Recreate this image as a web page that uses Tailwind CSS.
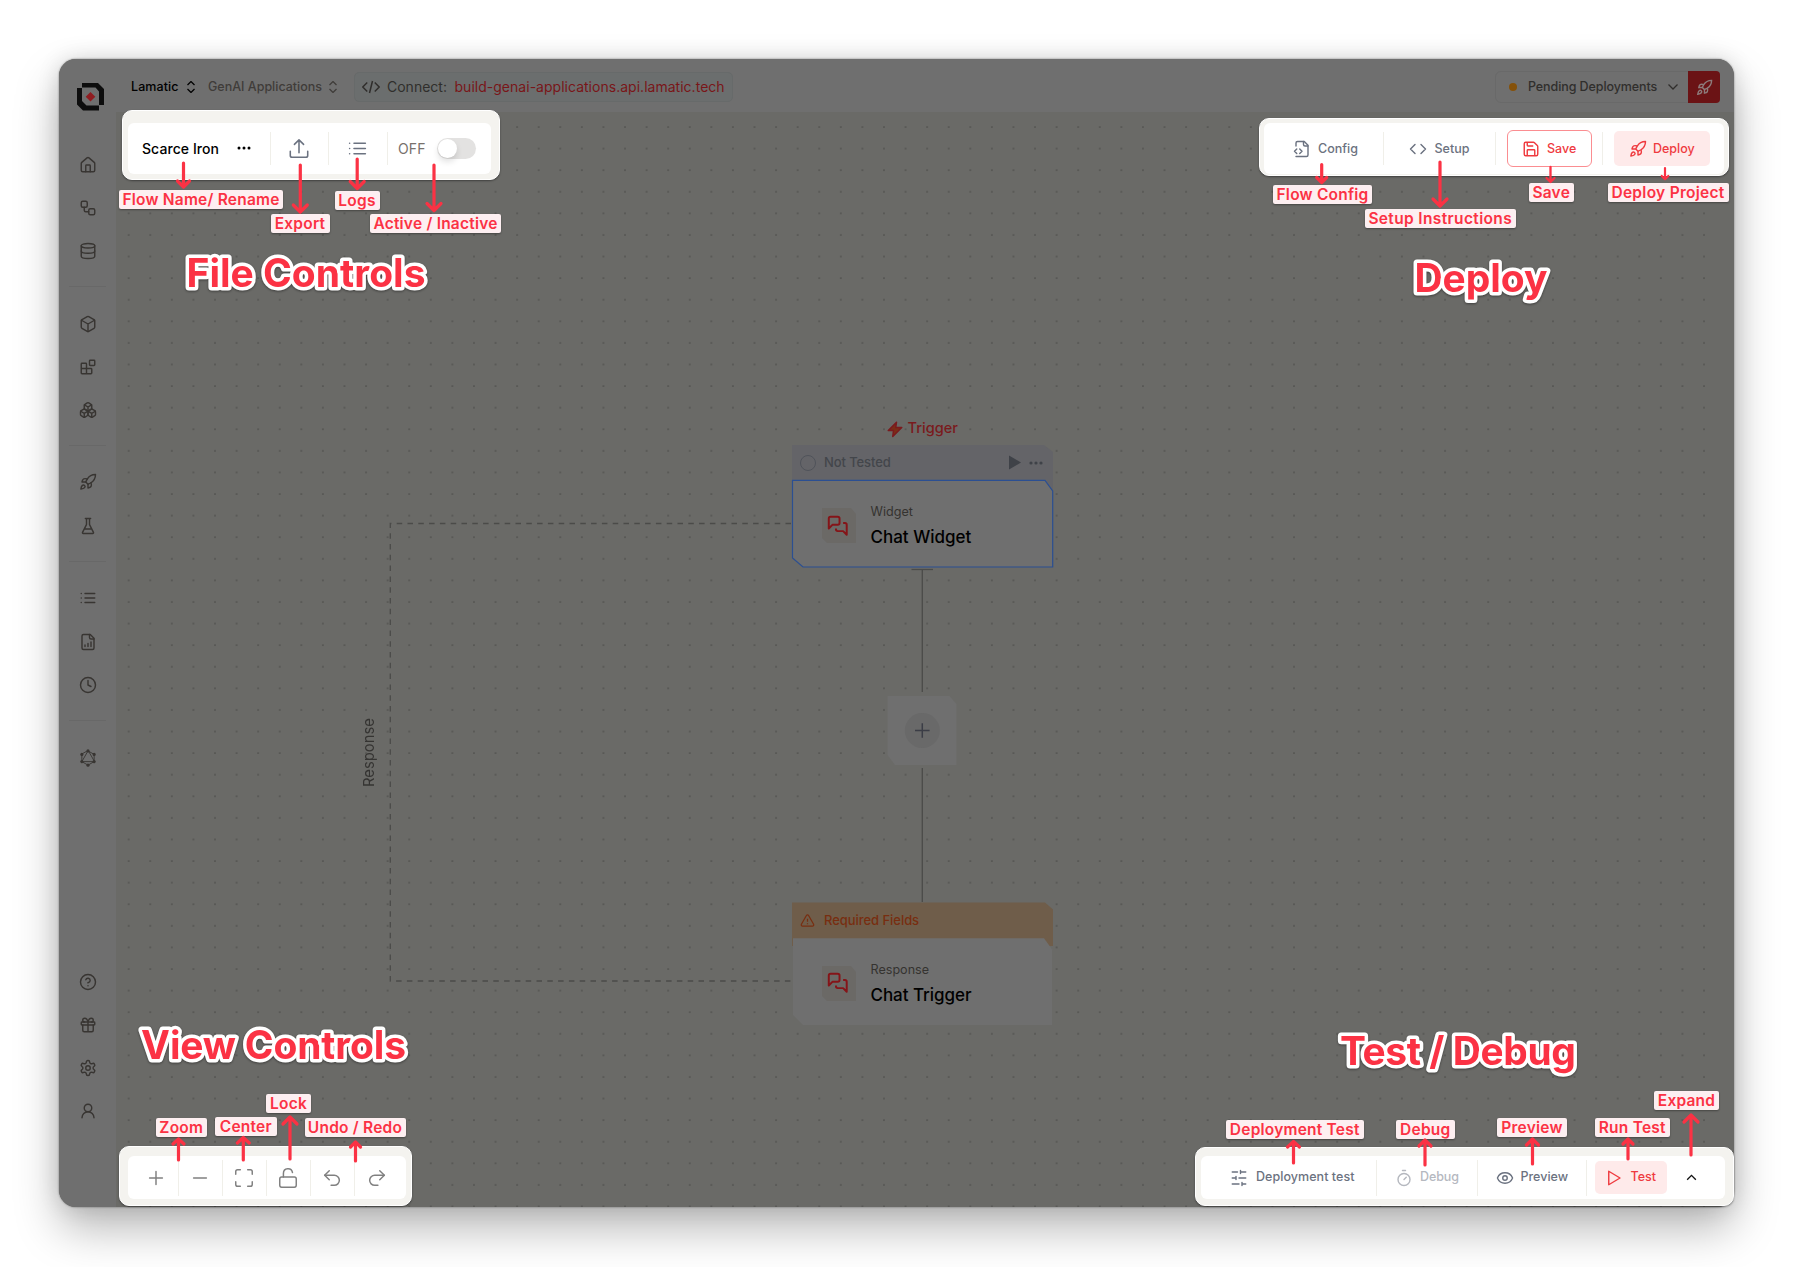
<!DOCTYPE html>
<html lang="en">
<head>
<meta charset="utf-8">
<title>Flow editor guide</title>
<script src="https://cdn.jsdelivr.net/npm/@tailwindcss/browser@4"></script>
</head>
<body class="bg-white font-[Inter,sans-serif] whitespace-nowrap">
<svg class="hidden">
  <defs>
    <symbol id="rocket" viewBox="0 0 24 24"><path d="M4.5 16.5c-1.5 1.26-2 5-2 5s3.74-.5 5-2c.71-.84.7-2.13-.09-2.91a2.18 2.18 0 0 0-2.91-.09z"/><path d="m12 15-3-3a22 22 0 0 1 2-3.95A12.88 12.88 0 0 1 22 2c0 2.72-.78 7.5-6 11a22.35 22.35 0 0 1-4 2z"/><path d="M9 12H4s.55-3.03 2-4c1.62-1.08 5 0 5 0"/><path d="M12 15v5s3.03-.55 4-2c1.08-1.62 0-5 0-5"/></symbol>
    <symbol id="list" viewBox="0 0 24 24"><path d="M8 6h13M8 12h13M8 18h13M3 6h.01M3 12h.01M3 18h.01"/></symbol>
    <symbol id="updown" viewBox="0 0 24 24"><path d="m5 8 7-7 7 7M5 16l7 7 7-7"/></symbol>
    <symbol id="chat" viewBox="0 0 24 24"><path d="M14 9a2 2 0 0 1-2 2H6l-4 4V4a2 2 0 0 1 2-2h8a2 2 0 0 1 2 2z"/><path d="M18 9h2a2 2 0 0 1 2 2v11l-4-4h-6a2 2 0 0 1-2-2v-1"/></symbol>
    <symbol id="redo" viewBox="0 0 24 24"><path d="m15 14 5-5-5-5"/><path d="M20 9H9.500a5.500 5.500 0 0 0 0 11H13"/></symbol>
  </defs>
</svg>
<main class="relative h-[1267px] w-[1793px] overflow-hidden pt-[59px] pl-[59px]">

  <div class="flex h-[1148px] w-[1674.5px] overflow-hidden rounded-[17px] bg-[#6a6a67] shadow-[0_22px_45px_rgba(0,0,0,0.28),0_0_22px_rgba(0,0,0,0.13),0_0_2px_rgba(0,0,0,0.5)]">
    <!-- Sidebar -->
    <nav class="flex w-[57px] shrink-0 flex-col items-center bg-[#6f6f6f] stroke-[#383532] fill-none [stroke-linecap:round] [stroke-linejoin:round] stroke-[1.9]">
      <svg class="mt-[24px] ml-[7px] size-[28px] shrink-0 stroke-none" viewBox="0 0 28 28"><path fill="#0d0d0d" fill-rule="evenodd" d="M5 0H21L27 6V22H22V8.500L18.500 4.500H5ZM0 5H5V18L9.500 22.500H22V27.500H6L0 21.500Z"/><path fill="#8f1c20" d="m13.500 9 4.800 4.800-4.800 4.800L8.700 13.800z"/></svg>
      <div class="mt-[32px] flex h-[144px] w-[37px] shrink-0 flex-col items-center gap-[25px] border-b border-[#686868]">
        <svg class="mt-[12.5px] size-[18px] shrink-0" viewBox="0 0 24 24"><path d="M15 21v-8a1 1 0 0 0-1-1h-4a1 1 0 0 0-1 1v8"/><path d="M3 10a2 2 0 0 1 .709-1.528l7-6a2 2 0 0 1 2.582 0l7 6A2 2 0 0 1 21 10v9a2 2 0 0 1-2 2H5a2 2 0 0 1-2-2z"/></svg>
        <svg class="size-[18px] shrink-0" viewBox="0 0 24 24"><rect width="8" height="8" x="3" y="3" rx="2"/><path d="M7 11v4a2 2 0 0 0 2 2h4"/><rect width="8" height="8" x="13" y="13" rx="2"/></svg>
        <svg class="size-[18px] shrink-0" viewBox="0 0 24 24"><ellipse cx="12" cy="5" rx="9" ry="3"/><path d="M3 5v14a9 3 0 0 0 18 0V5"/><path d="M3 12a9 3 0 0 0 18 0"/></svg>
      </div>
      <div class="flex h-[159px] w-[37px] shrink-0 flex-col items-center gap-[25px] border-b border-[#686868] pt-[27.5px]">
        <svg class="size-[18px] shrink-0" viewBox="0 0 24 24"><path d="M21 8a2 2 0 0 0-1-1.730l-7-4a2 2 0 0 0-2 0l-7 4A2 2 0 0 0 3 8v8a2 2 0 0 0 1 1.730l7 4a2 2 0 0 0 2 0l7-4A2 2 0 0 0 21 16Z"/><path d="m3.300 7 8.700 5 8.700-5M12 22V12"/></svg>
        <svg class="size-[18px] shrink-0" viewBox="0 0 24 24"><rect width="7" height="7" x="14" y="3" rx="1"/><path d="M10 21V8a1 1 0 0 0-1-1H4a1 1 0 0 0-1 1v12a1 1 0 0 0 1 1h12a1 1 0 0 0 1-1v-5a1 1 0 0 0-1-1H3"/></svg>
        <svg class="size-[18px] shrink-0" viewBox="0 0 24 24"><path d="M2.970 12.920A2 2 0 0 0 2 14.630v3.240a2 2 0 0 0 .970 1.710l3 1.800a2 2 0 0 0 2.060 0L12 19v-5.500l-5-3-4.030 2.420Z"/><path d="m7 16.500-4.740-2.850M7 16.500l5-3M7 16.500v5.170"/><path d="M12 13.500V19l3.970 2.380a2 2 0 0 0 2.060 0l3-1.800a2 2 0 0 0 .970-1.710v-3.240a2 2 0 0 0-.970-1.710L17 10.500l-5 3Z"/><path d="m17 16.500-5-3M17 16.500l4.740-2.850M17 16.500v5.170"/><path d="M7.970 4.420A2 2 0 0 0 7 6.130v4.370l5 3 5-3V6.130a2 2 0 0 0-.970-1.710l-3-1.800a2 2 0 0 0-2.060 0l-3 1.800Z"/><path d="M12 8 7.260 5.150M12 8l4.740-2.850M12 13.500V8"/></svg>
      </div>
      <div class="flex h-[116px] w-[37px] shrink-0 flex-col items-center gap-[26px] border-b border-[#686868] pt-[27px]">
        <svg class="size-[18px] shrink-0"><use href="#rocket"/></svg>
        <svg class="size-[18px] shrink-0" viewBox="0 0 24 24"><path d="M10 2v7.530a2 2 0 0 1-.210.900L4.720 20.550a1 1 0 0 0 .900 1.450h12.760a1 1 0 0 0 .900-1.450l-5.070-10.130a2 2 0 0 1-.210-.900V2M8.500 2h7M7 16h10"/></svg>
      </div>
      <div class="flex h-[159px] w-[37px] shrink-0 flex-col items-center gap-[25.5px] border-b border-[#686868] pt-[27px]">
        <svg class="size-[18px] shrink-0"><use href="#list"/></svg>
        <svg class="size-[18px] shrink-0" viewBox="0 0 24 24"><path d="M15 2H6a2 2 0 0 0-2 2v16a2 2 0 0 0 2 2h12a2 2 0 0 0 2-2V7Z"/><path d="M14 2v4a2 2 0 0 0 2 2h4M8 18v-2M12 18v-4M16 18v-6"/></svg>
        <svg class="size-[18px] shrink-0" viewBox="0 0 24 24"><circle cx="12" cy="12" r="10"/><path d="M12 6v6l4 2"/></svg>
      </div>
      <svg class="mt-[27.5px] size-[18px] shrink-0" viewBox="0 0 24 24"><g stroke-width="1.200"><path d="m12 2.500 8.200 4.700v9.600L12 21.500l-8.200-4.700V7.200z"/><path d="M12 2.500 3.800 16.800h16.400z"/></g><g fill="#383532" stroke="none"><circle cx="12" cy="2.500" r="2.100"/><circle cx="20.200" cy="7.200" r="2.100"/><circle cx="20.200" cy="16.800" r="2.100"/><circle cx="12" cy="21.500" r="2.100"/><circle cx="3.800" cy="16.800" r="2.100"/><circle cx="3.800" cy="7.200" r="2.100"/></g></svg>
      <div class="mt-auto mb-[87.5px] flex flex-col gap-[25px]">
        <svg class="size-[18px]" viewBox="0 0 24 24"><circle cx="12" cy="12" r="10"/><path d="M9.090 9a3 3 0 0 1 5.830 1c0 2-3 3-3 3M12 17h.010"/></svg>
        <svg class="size-[18px]" viewBox="0 0 24 24"><rect x="3" y="8" width="18" height="4" rx="1"/><path d="M12 8v13M19 12v7a2 2 0 0 1-2 2H7a2 2 0 0 1-2-2v-7M7.500 8a2.500 2.500 0 0 1 0-5A4.800 8 0 0 1 12 8a4.800 8 0 0 1 4.500-5 2.500 2.500 0 0 1 0 5"/></svg>
        <svg class="size-[18px]" viewBox="0 0 24 24"><path d="M12.220 2h-.440a2 2 0 0 0-2 2v.180a2 2 0 0 1-1 1.730l-.430.250a2 2 0 0 1-2 0l-.150-.080a2 2 0 0 0-2.730.730l-.220.380a2 2 0 0 0 .730 2.730l.150.100a2 2 0 0 1 1 1.720v.510a2 2 0 0 1-1 1.740l-.150.090a2 2 0 0 0-.730 2.730l.220.380a2 2 0 0 0 2.730.730l.150-.080a2 2 0 0 1 2 0l.430.250a2 2 0 0 1 1 1.730V20a2 2 0 0 0 2 2h.440a2 2 0 0 0 2-2v-.180a2 2 0 0 1 1-1.730l.430-.250a2 2 0 0 1 2 0l.150.080a2 2 0 0 0 2.730-.730l.220-.390a2 2 0 0 0-.730-2.730l-.150-.080a2 2 0 0 1-1-1.740v-.500a2 2 0 0 1 1-1.740l.150-.090a2 2 0 0 0 .730-2.730l-.220-.380a2 2 0 0 0-2.730-.730l-.150.080a2 2 0 0 1-2 0l-.430-.250a2 2 0 0 1-1-1.730V4a2 2 0 0 0-2-2z"/><circle cx="12" cy="12" r="3"/></svg>
        <svg class="size-[18px]" viewBox="0 0 24 24"><circle cx="12" cy="8" r="5"/><path d="M20 21a8 8 0 0 0-16 0"/></svg>
      </div>
    </nav>

    <div class="flex min-w-0 grow flex-col">
      <!-- Header -->
      <header class="flex h-[53px] shrink-0 items-center bg-[#6f6f6f] pt-[3px] pr-[13.5px] pl-[15px] text-[12.5px] font-medium">
        <span class="w-[48px] text-black tracking-[.07px]">Lamatic</span>
        <svg class="ml-[6px] size-[12px] shrink-0 fill-none stroke-black stroke-[2.500]"><use href="#updown"/></svg>
        <span class="ml-[11px] w-[113.5px] text-[#3f3c39]">GenAI Applications</span>
        <svg class="ml-[5.5px] size-[12px] shrink-0 fill-none stroke-[#3f3c39] stroke-[2.500]"><use href="#updown"/></svg>
        <div class="ml-[15px] flex h-[30px] w-[379px] items-center rounded-[5px] border border-[#676a6a] bg-[#6b6e6e] pl-[7px] text-[14px] font-normal">
          <svg class="size-[18px] shrink-0 fill-none stroke-[#302e2c] stroke-[2]" viewBox="0 0 24 24"><path d="m7 6-6 6 6 6M17 6l6 6-6 6M14 4l-4 16"/></svg>
          <span class="mb-[2px] ml-[7px] w-[60px] text-[#302e2c]">Connect:</span>
          <span class="mb-[2px] ml-[7.500px] tracking-[.02px] text-[#791619]">build-genai-applications.api.lamatic.tech</span>
        </div>
        <div class="ml-auto flex h-[32px] w-[225px] items-center rounded-[6px] border border-[#696969] pl-[13px] text-[#302e2c]">
          <i class="size-[8px] shrink-0 rounded-full bg-[#855109]"></i>
          <span class="ml-[11px] w-[129px] tracking-[-.09px]">Pending Deployments</span>
          <svg class="ml-[10px] size-[12px] shrink-0 fill-none stroke-[#302e2c] stroke-[2.500]" viewBox="0 0 24 24"><path d="m3 7 9 9 9-9"/></svg>
          <div class="-mr-px ml-auto flex h-[32px] w-[32px] items-center justify-center rounded-r-[4px] bg-[#6b1315]">
            <svg class="size-[17px] fill-none stroke-[#8d7b7b] stroke-[2]"><use href="#rocket"/></svg>
          </div>
        </div>
      </header>

      <!-- Canvas -->
      <section class="relative grow">
        <svg class="absolute top-0 left-0 h-[1095px] w-[1618px]" viewBox="116 112 1618 1095">
          <defs><pattern id="dots" x="117.900" y="202.510" width="21.580" height="21.590" patternUnits="userSpaceOnUse"><circle cx="10.790" cy="10.790" r=".85" fill="#4a4a48"/></pattern></defs>
          <rect x="124" y="118" width="1589" height="1089" fill="url(#dots)"/>
          <g fill="none" stroke="#4b4b49" stroke-width="1.300">
            <path stroke-dasharray="5.500 5.300" d="M791 523.500H390.300V981H791"/>
            <path d="M922.300 569V692M922.300 768V902"/>
            <path d="M911.500 569.500H933"/>
          </g>
          <path fill="#646468" d="M792 445H1044l9 7V493H792Z"/>
          <path fill="#6f6f6f" stroke="#2b4f92" stroke-width="1.200" d="M792.500 480.300H1045l7.700 10.700V567H803l-10.500-9Z"/>
          <path fill="#6f6f6f" d="M887.500 696h62l7 8v61H895l-7.500-10Z"/>
          <circle cx="922.300" cy="730.500" r="17.500" fill="#696969"/>
          <path stroke="#3b3d46" stroke-width="1.500" d="M915 730.500h14.600M922.300 723.200v14.600"/>
          <path fill="#6f5d4a" d="M792 902.500H1045l8 7V946H792Z"/>
          <path fill="#6f6f6f" d="M793 938.200H1044l8 11V1025H803l-10-10Z"/>
          <g fill="#6b6966"><path d="M822 508h29l5 6v29H827l-5-5ZM822 966h29l5 6v29H827l-5-5Z"/></g>
        </svg>

        <div class="absolute top-[306px] left-[769.5px] flex items-center text-[14.6px] font-medium text-[#7a1a1d]">
          <svg class="size-[18px] fill-[#7a2d17] stroke-[#7a1a1d] stroke-[2] [stroke-linejoin:round]" viewBox="0 0 24 24"><path d="M14 3 3 14h7l-1 8L21 10h-8z"/></svg>
          <span class="ml-[4px]">Trigger</span>
        </div>
        <div class="absolute top-[333.5px] left-[684px] flex h-[34px] w-[243px] items-center text-[13px] font-medium text-[#43464b]">
          <i class="size-[16px] rounded-full border border-[#50535a]"></i>
          <span class="ml-[8px] tracking-[-.1px]">Not Tested</span>
          <svg class="ml-auto h-[15px] w-[12px] fill-[#3f4248]" viewBox="0 0 12 15"><path d="M0 .5 12 7.500 0 14.500z"/></svg>
          <svg class="ml-[8px] h-[4px] w-[14px] fill-[#3f4248]" viewBox="0 0 14 4"><circle cx="2" cy="2" r="1.600"/><circle cx="7" cy="2" r="1.600"/><circle cx="12" cy="2" r="1.600"/></svg>
        </div>
        <div class="absolute top-[390px] left-[711px] flex items-center">
          <svg class="size-[21.500px] fill-none stroke-[#851418] stroke-[2.200] [stroke-linejoin:round]"><use href="#chat"/></svg>
          <div class="ml-[22px]">
            <p class="text-[12.6px]/[20px] text-[#353330]">Widget</p>
            <p class="mt-[3px] text-[17px]/[24px] font-medium text-black">Chat Widget</p>
          </div>
        </div>
        <div class="absolute top-[791.5px] left-[684px] flex h-[34px] items-center text-[13px] font-medium text-[#782e10]">
          <svg class="size-[15px] fill-none stroke-[#782e10] stroke-[2] [stroke-linejoin:round]" viewBox="0 0 24 24"><path d="m21.730 18-8-14a2 2 0 0 0-3.480 0l-8 14A2 2 0 0 0 4 21h16a2 2 0 0 0 1.730-3M12 9v5M12 16.500v1.500"/></svg>
          <span class="ml-[9px] tracking-[-.05px]">Required Fields</span>
        </div>
        <div class="absolute top-[847.5px] left-[711px] flex items-center">
          <svg class="size-[21.500px] fill-none stroke-[#851418] stroke-[2.200] [stroke-linejoin:round]"><use href="#chat"/></svg>
          <div class="ml-[22px]">
            <p class="text-[12.6px]/[20px] text-[#353330]">Response</p>
            <p class="mt-[3px] text-[17px]/[24px] font-medium text-black tracking-[-.05px]">Chat Trigger</p>
          </div>
        </div>
        <div class="absolute top-[606px] left-[242.5px] h-[70px] w-[20px] rotate-180 text-center text-[14.8px]/[20px] text-[#353432] [writing-mode:vertical-rl]">Response</div>
      </section>
    </div>
  </div>

  <!-- File controls -->
  <div class="absolute top-[110px] left-[122px] h-[70px] w-[378px] rounded-[10px] border border-white bg-[#f4f3ef] pt-[12px] pl-[5px] shadow-[0_1px_2px_rgba(0,0,0,0.4)]">
    <div class="flex h-[51px] w-[363px] items-center rounded-[6px] bg-white">
      <div class="flex h-[33px] w-[142.5px] items-center border-r border-[#f0efe9] pl-[14px] text-[14px] font-medium text-black">
        <span class="mb-px tracking-[.08px]">Scarce Iron</span>
        <svg class="ml-auto mr-[18.5px] mb-px h-[4px] w-[14px]" viewBox="0 0 14 4"><circle cx="2" cy="2" r="1.500"/><circle cx="7" cy="2" r="1.500"/><circle cx="12" cy="2" r="1.500"/></svg>
      </div>
      <div class="flex h-[33px] w-[58.5px] items-center justify-center border-r border-[#f0efe9]">
        <svg class="size-[22px] fill-none stroke-[#6b7280] stroke-[1.700] [stroke-linecap:round] [stroke-linejoin:round]" viewBox="0 0 24 24"><path d="M21.500 14.500V19a2 2 0 0 1-2 2h-15a2 2 0 0 1-2-2v-4.500M17 7l-5-5-5 5M12 2v14"/></svg>
      </div>
      <div class="flex h-[33px] w-[58.5px] items-center justify-center border-r border-[#f0efe9]">
        <svg class="size-[21px] fill-none stroke-[#6b7280] stroke-[1.800] [stroke-linecap:round]"><use href="#list"/></svg>
      </div>
      <span class="mb-px ml-[10.5px] w-[27.5px] text-[14px] tracking-[.15px] text-[#78716c]">OFF</span>
      <div class="ml-[11.5px] flex h-[21px] w-[39px] items-center rounded-full bg-[#e3e2e1] p-px"><i class="size-[18.500px] rounded-full bg-white shadow-[0_4px_6px_rgba(0,0,0,0.12)]"></i></div>
    </div>
  </div>

  <!-- Deploy controls -->
  <div class="absolute top-[118px] left-[1258.5px] h-[58px] w-[470.5px] rounded-[10px] border border-white bg-[#f4f3ef] pt-[4px] pl-[4.500px] shadow-[0_1px_2px_rgba(0,0,0,0.4)]">
    <div class="flex h-[51px] w-[460px] items-center rounded-[6px] bg-white text-[12.5px] font-medium text-[#6b7280]">
      <div class="flex h-[33px] w-[120px] items-center border-r border-[#f0efe9] pl-[29px]">
        <svg class="size-[18px] shrink-0 fill-none stroke-[#6b7280] stroke-[1.900] [stroke-linecap:round] [stroke-linejoin:round]" viewBox="0 0 24 24"><path d="M4 22h14a2 2 0 0 0 2-2V7l-5-5H6a2 2 0 0 0-2 2v4"/><path d="M14 2v4a2 2 0 0 0 2 2h4M5 12l-3 3 3 3M9 18l3-3-3-3"/></svg>
        <span class="mt-px ml-[7px]">Config</span>
      </div>
      <div class="flex h-[33px] w-[112px] items-center border-r border-[#f0efe9] pl-[25px]">
        <svg class="size-[18px] shrink-0 fill-none stroke-[#6b7280] stroke-[1.900] [stroke-linecap:round] [stroke-linejoin:round]" viewBox="0 0 24 24"><path d="m16 18 6-6-6-6M8 6l-6 6 6 6"/></svg>
        <span class="mt-px ml-[7.500px]">Setup</span>
      </div>
      <div class="flex h-[33px] w-[107px] items-center border-r border-[#f0efe9] pl-[10.500px]">
        <button class="flex h-[36.500px] w-[85px] shrink-0 items-center rounded-[6px] border border-[#fb8d91] pl-[14.500px] text-[#ef3a3f]">
          <svg class="size-[18px] shrink-0 fill-none stroke-[#ef3a3f] stroke-[1.900] [stroke-linejoin:round]" viewBox="0 0 24 24"><path d="M15.200 3a2 2 0 0 1 1.400.600l3.800 3.800a2 2 0 0 1 .600 1.400V19a2 2 0 0 1-2 2H5a2 2 0 0 1-2-2V5a2 2 0 0 1 2-2zM17 21v-7a1 1 0 0 0-1-1H8a1 1 0 0 0-1 1v7M7 3v4a1 1 0 0 0 1 1h7"/></svg>
          <span class="mt-px ml-[7px]">Save</span>
        </button>
      </div>
      <button class="ml-[11px] flex h-[35px] w-[96px] items-center rounded-[5px] bg-[#feeaea] pl-[14.5px] text-[#ef3a3f]">
        <svg class="size-[18px] shrink-0 fill-none stroke-[#ef3a3f] stroke-[1.900] [stroke-linejoin:round]"><use href="#rocket"/></svg>
        <span class="mt-px ml-[6.5px]">Deploy</span>
      </button>
    </div>
  </div>

  <!-- View controls -->
  <div class="absolute top-[1145.5px] left-[118.5px] h-[60px] w-[293.5px] rounded-[10px] border border-white bg-[#f4f3ef] pt-[9.5px] pl-[8.5px] shadow-[0_1px_2px_rgba(0,0,0,0.4)]">
    <div class="flex h-[43px] w-[277.5px] items-center rounded-[6px] bg-white px-[6.500px] fill-none stroke-[#808080] stroke-[1.600] [stroke-linecap:round] [stroke-linejoin:round]">
      <div class="flex h-[36px] w-[44px] items-center justify-center border-r border-[#f0efe9]"><svg class="size-[22px]" viewBox="0 0 24 24"><path d="M5 12h14M12 5v14"/></svg></div>
      <div class="flex h-[36px] w-[44px] items-center justify-center border-r border-[#f0efe9]"><svg class="size-[22px]" viewBox="0 0 24 24"><path d="M5 12h14"/></svg></div>
      <div class="flex h-[36px] w-[44px] items-center justify-center border-r border-[#f0efe9]"><svg class="size-[22px]" viewBox="0 0 24 24"><path d="M8 3H5a2 2 0 0 0-2 2v3M21 8V5a2 2 0 0 0-2-2h-3M3 16v3a2 2 0 0 0 2 2h3M16 21h3a2 2 0 0 0 2-2v-3"/></svg></div>
      <div class="flex h-[36px] w-[44px] items-center justify-center border-r border-[#f0efe9]"><svg class="size-[22px]" viewBox="0 0 24 24"><rect width="18" height="11" x="3" y="11" rx="2"/><path d="M7 11V7a5 5 0 0 1 9.900-1"/></svg></div>
      <div class="flex h-[36px] w-[44px] items-center justify-center border-r border-[#f0efe9]"><svg class="size-[22px] -scale-x-100"><use href="#redo"/></svg></div>
      <div class="flex h-[36px] w-[44px] items-center justify-center"><svg class="size-[22px]"><use href="#redo"/></svg></div>
    </div>
  </div>

  <!-- Test controls -->
  <div class="absolute top-[1146.5px] left-[1194.5px] h-[59.5px] w-[539px] rounded-[10px] border border-white bg-[#f4f3ef] pt-[8.5px] pl-[5.500px] shadow-[0_1px_2px_rgba(0,0,0,0.4)]">
    <div class="flex h-[43px] w-[524px] items-center rounded-[6px] bg-white text-[12.5px] font-medium text-[#6b7280]">
      <div class="flex h-[36px] w-[175.5px] items-center border-r border-[#f0efe9] pl-[29px]">
        <svg class="size-[18px] shrink-0 fill-none stroke-[#6b7280] stroke-[1.900] [stroke-linecap:round]" viewBox="0 0 24 24"><path d="M21 4h-7M10 4H3M21 12h-9M8 12H3M21 20h-5M12 20H3M14 2v4M8 10v4M16 18v4"/></svg>
        <span class="ml-[8px] tracking-[.05px]">Deployment test</span>
      </div>
      <div class="flex h-[36px] w-[101px] items-center border-r border-[#f0efe9] pl-[18px] text-[#b5b8bf]">
        <svg class="size-[18px] shrink-0 fill-none stroke-[#b5b8bf] stroke-[1.900] [stroke-linecap:round]" viewBox="0 0 24 24"><path d="M10 2h4M12 14l3-3"/><circle cx="12" cy="14" r="8"/></svg>
        <span class="ml-[7.500px] tracking-[-.1px]">Debug</span>
      </div>
      <div class="flex h-[36px] w-[109.5px] items-center border-r border-[#f0efe9] pl-[18px]">
        <svg class="size-[18px] shrink-0 fill-none stroke-[#6b7280] stroke-[1.900]" viewBox="0 0 24 24"><path d="M2.060 12.350a1 1 0 0 1 0-.700 10.750 10.750 0 0 1 19.880 0 1 1 0 0 1 0 .700 10.750 10.750 0 0 1-19.880 0"/><circle cx="12" cy="12" r="3"/></svg>
        <span class="ml-[7px]">Preview</span>
      </div>
      <button class="ml-[7.5px] flex h-[32.500px] w-[72px] items-center rounded-[5px] bg-[#feeaea] pl-[10px] text-[#ef3a3f]">
        <svg class="size-[18px] shrink-0 fill-none stroke-[#ef3a3f] stroke-[1.900] [stroke-linejoin:round]" viewBox="0 0 24 24"><path d="m5 3 15 9-15 9z"/></svg>
        <span class="ml-[8px]">Test</span>
      </button>
      <svg class="ml-[18px] size-[13px] fill-none stroke-[#111] stroke-[2.500]" viewBox="0 0 24 24"><path d="m4 16 8-8 8 8"/></svg>
    </div>
  </div>

  <!-- Callout labels -->
  <div class="text-[15.500px]/[20px] font-semibold tracking-[.22px] text-[#fb3244] *:absolute *:h-[19px] *:rounded-[2px] *:bg-[#fdeff1] *:text-center *:shadow-[0_1px_2px_rgba(0,0,0,0.35)]">
    <div class="top-[189.500px] left-[119px] w-[164px]">Flow Name/ Rename</div>
    <div class="top-[214px] left-[270.5px] w-[59px]">Export</div>
    <div class="top-[191px] left-[334.5px] w-[45px]">Logs</div>
    <div class="top-[214px] left-[370px] w-[131px]">Active / Inactive</div>
    <div class="top-[185px] left-[1273px] w-[99px]">Flow Config</div>
    <div class="top-[209px] left-[1364.500px] w-[151.500px] tracking-[.36px]">Setup Instructions</div>
    <div class="top-[183px] left-[1528.5px] w-[45.500px]">Save</div>
    <div class="top-[182.5px] left-[1607.5px] w-[121px] tracking-[.28px]">Deploy Project</div>
    <div class="top-[1118px] left-[155.5px] w-[51.500px]">Zoom</div>
    <div class="top-[1117px] left-[215px] w-[61.500px]">Center</div>
    <div class="top-[1094px] left-[266px] w-[45px]">Lock</div>
    <div class="top-[1118px] left-[304.5px] w-[101px]">Undo / Redo</div>
    <div class="top-[1119.500px] left-[1225.500px] w-[138.5px]">Deployment Test</div>
    <div class="top-[1119.500px] left-[1396px] w-[58.500px]">Debug</div>
    <div class="top-[1118px] left-[1497px] w-[70px]">Preview</div>
    <div class="top-[1117.500px] left-[1594.5px] w-[75.500px]">Run Test</div>
    <div class="top-[1091px] left-[1654px] w-[65px]">Expand</div>
  </div>

  <!-- Arrows and section titles -->
  <svg class="absolute inset-0 size-full" viewBox="0 0 1793 1267">
    <g fill="none" stroke="#fb3244" stroke-width="3.2" stroke-linecap="round" stroke-linejoin="round">
      <path d="M183.500 163v23M177.500 181l6 6 6-6"/>
      <path d="M300.300 165v46M293.300 205l7 7 7-7"/>
      <path d="M357.200 159v28M350.200 181.500l7 7 7-7"/>
      <path d="M434 165v45M427 203.500l7 7 7-7"/>
      <path d="M1321.700 164.500v17M1316.700 177.500l5 5 5-5"/>
      <path d="M1440 162v43M1433 199l7 7 7-7"/>
      <path stroke-width="2.300" d="M1550.500 167v14M1546.500 178l4 4 4-4"/>
      <path stroke-width="2.200" d="M1665 168v11M1661.700 176l3.300 3.200 3.300-3.200"/>
      <path d="M178.500 1160v-20M173 1144l5.500-5 5.500 5"/>
      <path d="M243.300 1160v-21M237.300 1143l6-5.500 6 5.500"/>
      <path d="M290 1159v-41M283 1124l7-7 7 7"/>
      <path d="M355.500 1161v-18M350.500 1147l5-5 5 5"/>
      <path d="M1293.500 1163v-20M1287.500 1147l6-5.500 6 5.500"/>
      <path d="M1425 1165v-24M1419 1146l6-6 6 6"/>
      <path d="M1532.500 1164v-24M1526.500 1145l6-6 6 6"/>
      <path d="M1628 1159v-19M1623 1144l5-5 5 5"/>
      <path d="M1691 1155v-39M1684 1122l7-7 7 7"/>
    </g>
    <g class="font-[Inter,sans-serif] text-[39px] font-bold [paint-order:stroke] drop-shadow-[0_1px_1px_rgba(0,0,0,0.4)]" fill="#fb3244" stroke="#fff" stroke-width="7" stroke-linejoin="round">
      <text x="186.500" y="287" textLength="239">File Controls</text>
      <text x="1414.500" y="292" textLength="133">Deploy</text>
      <text x="141" y="1059" textLength="265">View Controls</text>
      <text x="1340" y="1065" textLength="236">Test / Debug</text>
    </g>
  </svg>
</main>
</body>
</html>
